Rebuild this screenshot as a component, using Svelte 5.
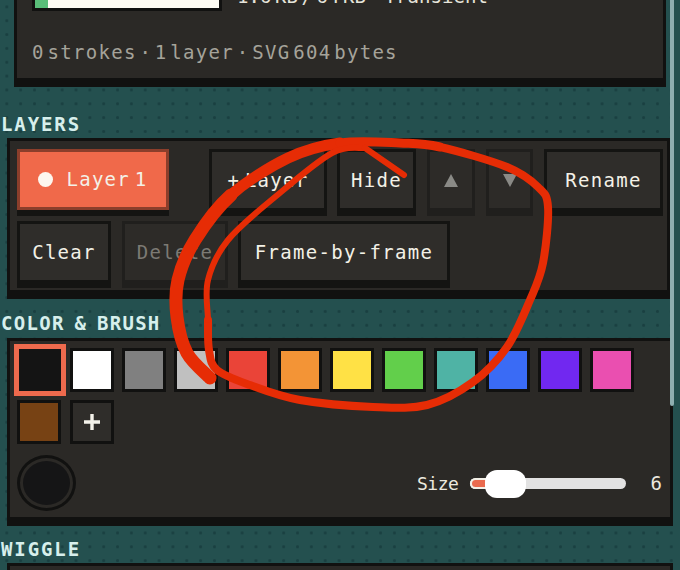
<script>
  const colors = ['#ffffff','#808080','#c0c0c0','#ea4438','#f39436','#ffe145','#62cf4b','#4fb3a5','#3a6bf5','#7128f0','#ea4fb0','#774214'];

  const pts = [[210,378],[187,353],[177,317],[178,280],[195,240],[231,195],[288,158],[340,143],[400,143],[440,147],[507,167],[538,187],[548,207],[543,263],[530,300],[507,347],[473,382],[427,405],[373,407],[300,400],[250,385],[217,370],[209,350],[208,320],[208,280],[228,240],[275,197],[332,153],[365,148]];

  // Catmull-Rom segment run from index a to index b, as a Bezier path
  function spline(a, b) {
    let d = `M${pts[a][0]} ${pts[a][1]}`;
    for (let i = a; i < b; i++) {
      const p0 = pts[Math.max(i - 1, 0)], p1 = pts[i], p2 = pts[i + 1], p3 = pts[Math.min(i + 2, pts.length - 1)];
      const c1 = [p1[0] + (p2[0] - p0[0]) / 6, p1[1] + (p2[1] - p0[1]) / 6];
      const c2 = [p2[0] - (p3[0] - p1[0]) / 6, p2[1] - (p3[1] - p1[1]) / 6];
      d += ` C${c1[0]} ${c1[1]} ${c2[0]} ${c2[1]} ${p2[0]} ${p2[1]}`;
    }
    return d;
  }
  const strokes = [
    { d: spline(0, 5), w: 13 },
    { d: spline(5, 7), w: 11 },
    { d: spline(7, 9), w: 9 },
    { d: spline(9, 23), w: 8 },
    { d: spline(23, 28), w: 6 },
    { d: 'M365 148 L404 175', w: 6 }
  ];
</script>

<div class="page">
  <div class="scroll">
    <section class="panel first">
      <div class="usage">
        <div class="meter"><div class="meter-fill"></div></div>
        <span class="usage-text">1.6 KB / 64 KB · Transient</span>
      </div>
      <p class="stats">0 strokes · 1 layer · SVG 604 bytes</p>
    </section>

    <h2 class="h-layers">LAYERS</h2>
    <section class="panel layers">
      <div class="row">
        <button class="btn active"><i class="dot"></i>Layer 1</button>
        <button class="btn add">+ Layer</button>
        <button class="btn hide">Hide</button>
        <button class="btn arrow off" aria-label="up"><svg width="14" height="13" viewBox="0 0 14 13"><path d="M7 0 L14 13 H0 Z" fill="#8a8a86"/></svg></button>
        <button class="btn arrow off" aria-label="down"><svg width="14" height="13" viewBox="0 0 14 13"><path d="M0 0 H14 L7 13 Z" fill="#8a8a86"/></svg></button>
        <button class="btn rename">Rename</button>
      </div>
      <div class="row">
        <button class="btn clear">Clear</button>
        <button class="btn delete off">Delete</button>
        <button class="btn frame">Frame-by-frame</button>
      </div>
    </section>

    <h2 class="h-color">COLOR &amp; BRUSH</h2>
    <section class="panel brush">
      <div class="swatches">
        <button class="swatch selected" aria-label="black"></button>
        {#each colors as c}
          <button class="swatch" style="background:{c}" aria-label={c}></button>
        {/each}
        <button class="swatch plus" aria-label="add">
          <svg width="16" height="16" viewBox="0 0 16 16"><path d="M8 0V16M0 8H16" stroke="#f4f2ea" stroke-width="3.4"/></svg>
        </button>
      </div>
      <div class="tools">
        <div class="picker"><div class="picker-in"></div></div>
        <div class="size">
          <span class="size-label">Size</span>
          <div class="slider"><div class="slider-fill"></div><div class="thumb"></div></div>
          <span class="size-val">6</span>
        </div>
      </div>
    </section>

    <h2 class="h-wiggle">WIGGLE</h2>
    <section class="panel last"></section>
  </div>

  <div class="scrollbar"></div>

  <svg class="scribble" width="680" height="570" viewBox="0 0 680 570" fill="none" stroke="#e62c05" stroke-linecap="round" stroke-linejoin="round">
    {#each strokes as s}
      <path d={s.d} stroke-width={s.w} />
    {/each}
  </svg>
</div>

<style>
  :global(body) { margin: 0; background: #24504f; }
  .page {
    position: relative;
    width: 680px;
    height: 570px;
    overflow: hidden;
    background-color: #24504f;
    background-image: radial-gradient(circle at 1.5px 1.5px, #1a4041 1.2px, transparent 1.7px);
    background-size: 13.85px 13.85px;
    background-position: 5.3px 5.4px;
    font-family: "DejaVu Sans Mono", "Liberation Mono", monospace;
  }
  .scroll {
    display: flex;
    flex-direction: column;
    margin-top: -40px;
    padding: 0 7px 0 7px;
    width: 666px;
    box-sizing: content-box;
  }
  .panel {
    box-sizing: border-box;
    background: #2b2926;
    border: 3px solid #111110;
    border-bottom-width: 9px;
  }
  .first {
    margin-left: 7px;
    width: 652px;
    height: 127px;
    padding: 18px 15px 0 15px;
  }
  .usage { display: flex; align-items: center; gap: 15px; height: 30px; }
  .meter {
    box-sizing: border-box;
    width: 190px;
    height: 30px;
    background: #fdfbf3;
    border: 3px solid #111110;
  }
  .meter-fill { width: 13px; height: 100%; background: #59bd78; }
  .usage-text { font-size: 19px; letter-spacing: 0.06px; word-spacing: -8px; color: #e6e4da; white-space: nowrap; }
  .stats {
    margin: 31px 0 0;
    font-size: 19px;
    letter-spacing: 1.3px;
    word-spacing: -10px;
    color: #a5a39a;
    white-space: nowrap;
    line-height: 20px;
  }
  h2 {
    margin: 26px 0 4px -6px;
    height: 18px;
    font-size: 19px;
    font-weight: 700;
    line-height: 18px;
    letter-spacing: 1.9px;
    color: #d7efec;
  }
  .h-layers { margin-top: 28px; margin-bottom: 5px; }
  .layers { width: 663px; height: 161px; padding: 8px 0 7px 7px; }
  .row { display: flex; gap: 10px; }
  .row + .row { margin-top: 5px; }
  .btn {
    box-sizing: border-box;
    flex: none;
    height: 67px;
    padding: 0;
    background: #2f2d2a;
    border: 3px solid #141412;
    border-bottom-width: 8px;
    color: #f3f1e7;
    font: inherit;
    font-size: 19px;
    line-height: 1;
    letter-spacing: 1.3px;
    word-spacing: -8px;
    display: flex;
    align-items: center;
    justify-content: center;
    white-space: nowrap;
  }
  .off { background: #2d2b28; border-color: #201f1d; color: #7c7a74; }
  .active {
    width: 152px;
    margin-right: 30px;
    background: #f0694a;
    border-color: #8b3e2b;
    border-bottom: 3px solid #8b3e2b;
    height: 61px;
    box-shadow: 0 6px 0 #141412;
    gap: 13px;
  }
  .dot { width: 15px; height: 15px; border-radius: 50%; background: #fdf6ee; }
  .add { width: 118px; }
  .hide { width: 79px; }
  .arrow { width: 48px; margin-left: 1px; }
  .arrow + .arrow { width: 47px; }
  .rename { width: 119px; margin-left: 1px; }
  .clear { width: 94px; margin-right: 1px; }
  .delete { width: 106px; }
  .frame { width: 212px; }

  .h-color { margin-top: 15px; margin-bottom: 6px; letter-spacing: 1.3px; word-spacing: -3px; }
  .brush { width: 666px; height: 188px; padding: 3px 0 0 4px; }
  .swatches { display: flex; flex-wrap: wrap; gap: 8px; row-gap: 4px; align-items: center; width: 640px; }
  .swatch {
    box-sizing: border-box;
    width: 44px;
    height: 44px;
    padding: 0;
    border: 3px solid #111110;
    background: #2f2d2a;
    display: flex;
    align-items: center;
    justify-content: center;
  }
  .selected {
    width: 52px;
    height: 52px;
    margin-right: -4px;
    background: #141414;
    border: 5px solid #ee6a4d;
  }
  .swatch:nth-child(13) { margin-left: 3px; margin-right: 1px; }
  .tools { display: flex; align-items: center; justify-content: space-between; margin-top: 11px; padding-left: 3px; }
  .picker {
    box-sizing: border-box;
    width: 59px;
    height: 56px;
    border-radius: 50%;
    background: #2b2926;
    border: 3px solid #111110;
    padding: 3px;
  }
  .picker-in { width: 100%; height: 100%; border-radius: 50%; background: #151516; }
  .size { display: flex; align-items: center; padding-right: 8px; }
  .size-label { font-size: 18px; letter-spacing: -0.5px; color: #ece9df; width: 53px; }
  .slider { position: relative; width: 156px; height: 11px; border-radius: 6px; background: #e2e2e2; border: 0; }
  .slider-fill { width: 20px; height: 100%; box-sizing: border-box; border: 2px solid #f2efe6; border-right: 0; border-radius: 6px 0 0 6px; background: #ea6a4e; }
  .thumb {
    position: absolute;
    left: 15px;
    top: -8px;
    width: 41px;
    height: 28px;
    border-radius: 12px;
    background: #ffffff;
  }
  .size-val { width: 36px; text-align: right; font-size: 19px; color: #ece9df; }
  .h-wiggle { margin-top: 14px; margin-bottom: 5px; }
  .last { width: 666px; height: 60px; }

  .scrollbar {
    position: absolute;
    left: 670px;
    top: 0;
    width: 4px;
    height: 406px;
    border-radius: 0 0 2px 2px;
    background: #8eaeb0;
  }
  .scribble { position: absolute; left: 0; top: 0; pointer-events: none; }
</style>
